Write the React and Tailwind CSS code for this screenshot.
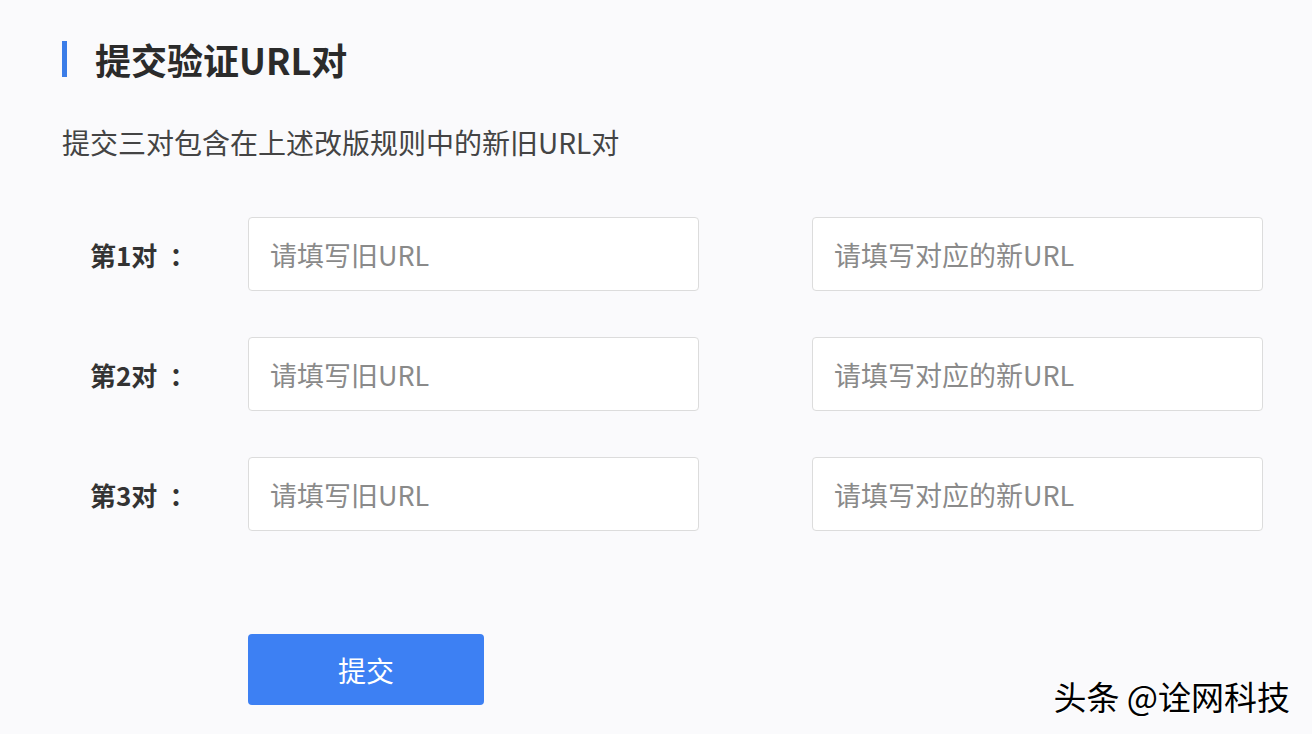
import React from 'react';

const ROWS = [1, 2, 3];

export default function App() {
  return (
    <div className="relative w-[1312px] h-[734px] overflow-hidden bg-[#fafafc] font-['Noto_Sans_CJK_SC','Noto_Sans',sans-serif]">
      <div className="pl-[62px] pt-[36px]">
        {/* 标题 */}
        <div className="flex items-center h-[46px]">
          <div className="w-[5px] h-[36px] bg-[#3b7de8]" />
          <h1 className="ml-[28px] text-[36px] leading-[46px] font-bold text-[#2b2b2b]">提交验证URL对</h1>
        </div>
        <p className="mt-[40px] text-[28px] leading-[40px] text-[#444]">提交三对包含在上述改版规则中的新旧URL对</p>

        {/* URL 对 */}
        <div className="mt-[55px] flex flex-col gap-[46px]">
          {ROWS.map((n) => (
            <div key={n} className="flex items-center">
              <span className="w-[186px] pl-[28px] text-[26px] font-bold text-[#333]">
                第{n}对<span className="ml-[12px]">：</span>
              </span>
              <input
                placeholder="请填写旧URL"
                className="w-[451px] h-[74px] px-[21px] bg-white border border-[#dcdcdc] rounded-[4px] text-[27px] text-[#333] placeholder:text-[#8a8a8a] outline-none"
              />
              <input
                placeholder="请填写对应的新URL"
                className="ml-[113px] w-[451px] h-[74px] px-[21px] bg-white border border-[#dcdcdc] rounded-[4px] text-[27px] text-[#333] placeholder:text-[#8a8a8a] outline-none"
              />
            </div>
          ))}
        </div>

        <button className="mt-[103px] ml-[186px] w-[236px] h-[71px] bg-[#3d80f3] rounded-[4px] text-white text-[28px]">
          提交
        </button>
      </div>

      {/* 水印 */}
      <div className="absolute right-[22px] bottom-[17px] text-[33px] leading-[42px] text-black [text-shadow:1px_1px_0_#fff,-1px_-1px_0_#fff]">
        头条 @诠网科技
      </div>
    </div>
  );
}
